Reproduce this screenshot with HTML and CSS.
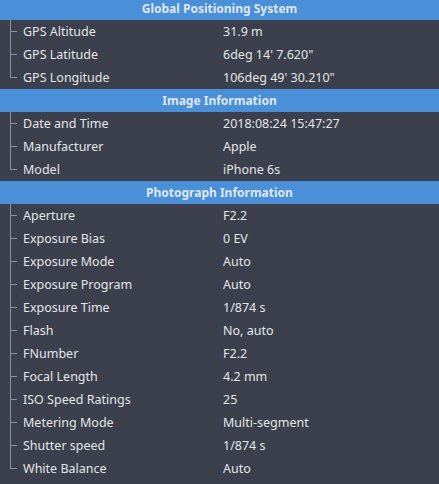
FILE: index.html
```html
<!DOCTYPE html>
<html>
<head>
<meta charset="utf-8">
<link rel="stylesheet" href="styles.css">
</head>
<body>
<div class="panel">
  <div class="section">
    <div class="header">Global Positioning System</div>
    <div class="row"><span class="key">GPS Altitude</span><span class="val">31.9 m</span></div>
    <div class="row"><span class="key">GPS Latitude</span><span class="val">6deg 14' 7.620"</span></div>
    <div class="row last"><span class="key">GPS Longitude</span><span class="val">106deg 49' 30.210"</span></div>
  </div>
  <div class="section">
    <div class="header">Image Information</div>
    <div class="row"><span class="key">Date and Time</span><span class="val">2018:08:24 15:47:27</span></div>
    <div class="row"><span class="key">Manufacturer</span><span class="val">Apple</span></div>
    <div class="row last"><span class="key">Model</span><span class="val">iPhone 6s</span></div>
  </div>
  <div class="section">
    <div class="header">Photograph Information</div>
    <div class="row"><span class="key">Aperture</span><span class="val">F2.2</span></div>
    <div class="row"><span class="key">Exposure Bias</span><span class="val">0 EV</span></div>
    <div class="row"><span class="key">Exposure Mode</span><span class="val">Auto</span></div>
    <div class="row"><span class="key">Exposure Program</span><span class="val">Auto</span></div>
    <div class="row"><span class="key">Exposure Time</span><span class="val">1/874 s</span></div>
    <div class="row"><span class="key">Flash</span><span class="val">No, auto</span></div>
    <div class="row"><span class="key">FNumber</span><span class="val">F2.2</span></div>
    <div class="row"><span class="key">Focal Length</span><span class="val">4.2 mm</span></div>
    <div class="row"><span class="key">ISO Speed Ratings</span><span class="val">25</span></div>
    <div class="row"><span class="key">Metering Mode</span><span class="val">Multi-segment</span></div>
    <div class="row"><span class="key">Shutter speed</span><span class="val">1/874 s</span></div>
    <div class="row last"><span class="key">White Balance</span><span class="val">Auto</span></div>
  </div>
</div>
</body>
</html>
```
FILE: styles.css
```css
html, body {
  margin: 0;
  padding: 0;
  background: #3b404c;
  height: 100%;
  overflow: hidden;
}
.panel {
  margin-top: -3px;
  font-family: "Noto Sans", "Open Sans", sans-serif;
  font-size: 12.5px;
  color: #e3e5e8;
}
.header {
  height: 23px;
  line-height: 23px;
  background: #4a90d9;
  color: #dfe6ef;
  text-align: center;
  font-weight: bold;
  font-size: 12px;
}
.row {
  position: relative;
  height: 23px;
  line-height: 23px;
  display: flex;
}
.row::before {
  content: "";
  position: absolute;
  left: 10px;
  top: 0;
  bottom: 0;
  border-left: 1px solid #8e9198;
}
.row.last::before {
  bottom: 11px;
}
.row::after {
  content: "";
  position: absolute;
  left: 10px;
  top: 11px;
  width: 7px;
  border-top: 1px solid #8e9198;
}
.key {
  padding-left: 23px;
  width: 200px;
}
.val {
  flex: 1;
}
```
